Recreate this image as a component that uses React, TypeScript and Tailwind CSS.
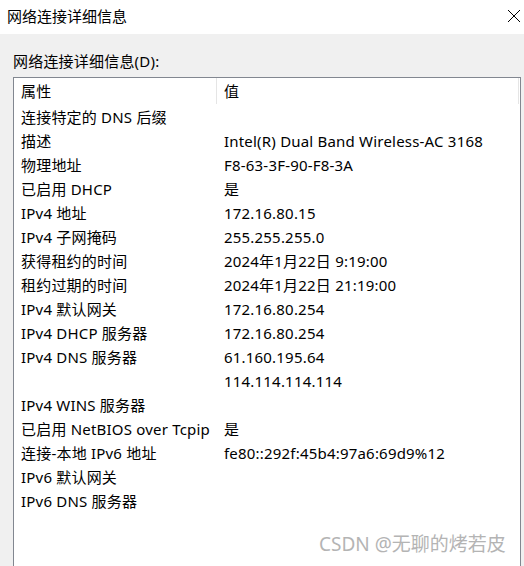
import React from "react";

const rows: [string, string][] = [
  ["连接特定的 DNS 后缀", ""],
  ["描述", "Intel(R) Dual Band Wireless-AC 3168"],
  ["物理地址", "F8-63-3F-90-F8-3A"],
  ["已启用 DHCP", "是"],
  ["IPv4 地址", "172.16.80.15"],
  ["IPv4 子网掩码", "255.255.255.0"],
  ["获得租约的时间", "2024年1月22日 9:19:00"],
  ["租约过期的时间", "2024年1月22日 21:19:00"],
  ["IPv4 默认网关", "172.16.80.254"],
  ["IPv4 DHCP 服务器", "172.16.80.254"],
  ["IPv4 DNS 服务器", "61.160.195.64"],
  ["", "114.114.114.114"],
  ["IPv4 WINS 服务器", ""],
  ["已启用 NetBIOS over Tcpip", "是"],
  ["连接-本地 IPv6 地址", "fe80::292f:45b4:97a6:69d9%12"],
  ["IPv6 默认网关", ""],
  ["IPv6 DNS 服务器", ""],
];

export default function App() {
  return (
    <div
      className="w-[524px] h-[566px] overflow-hidden bg-[#f0f0f0] flex flex-col text-[#000] relative"
      style={{ fontFamily: '"Noto Sans", "Noto Sans CJK SC", sans-serif' }}
    >
      <div className="h-[34px] bg-white flex items-center justify-between pl-[7px] pr-[2px] shrink-0">
        <span className="text-[15px] leading-none -mt-[2px]">网络连接详细信息</span>
        <svg width="14" height="14" viewBox="0 0 14 14" className="mr-[1px] -mt-[2px]">
          <path d="M1 1 L13 13 M13 1 L1 13" stroke="#000" strokeWidth="1" />
        </svg>
      </div>
      <div className="pl-[13px] pr-[3px] pt-[17px] flex flex-col flex-1">
        <div className="text-[15px] leading-[20px] h-[26px] tracking-[0.2px]">网络连接详细信息(D):</div>
        <div className="border border-[#828790] border-b-0 bg-white flex-1 flex flex-col tracking-[0.2px]">
          <div className="h-[27px] flex items-start relative">
            <div className="w-[203px] pl-[7px] text-[15px] border-r border-[#e5e5e5] h-[26px] flex items-center">属性</div>
            <div className="pl-[7px] text-[15px] flex-1 h-[26px] flex items-center border-r border-[#e5e5e5] mr-[1px]">值</div>
          </div>
          {rows.map(([k, v], i) => (
            <div key={i} className="h-[24px] flex items-center text-[15px] whitespace-nowrap">
              <div className="w-[203px] pl-[7px]">{k}</div>
              <div className="pl-[7px]">{v}</div>
            </div>
          ))}
        </div>
      </div>
      <div className="absolute left-[319px] top-[535px] text-[19px] text-[#b4b4b4] leading-none">
        CSDN @无聊的烤若皮
      </div>
    </div>
  );
}
